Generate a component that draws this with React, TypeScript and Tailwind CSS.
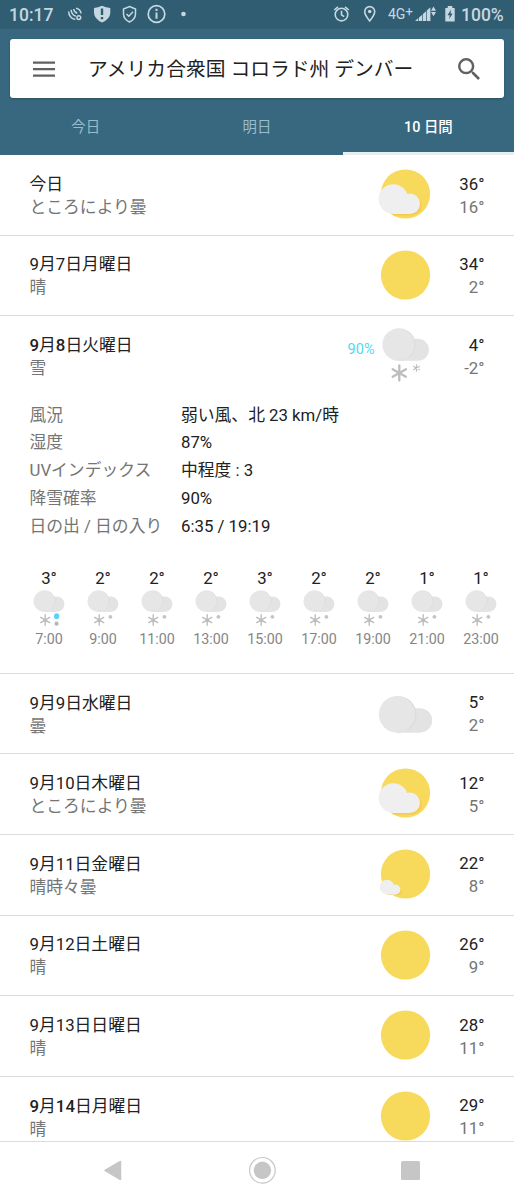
import type { ReactNode } from 'react'
import clsx from 'clsx'

type Condition = 'sunny' | 'mostlySunny' | 'partlyCloudy' | 'cloudy' | 'snow'

interface Day {
  date: string
  label: string
  condition: Condition
  high: string
  low: string
  bold?: boolean
}

const before: Day[] = [
  { date: '今日', label: 'ところにより曇', condition: 'partlyCloudy', high: '36°', low: '16°' },
  { date: '9月7日月曜日', label: '晴', condition: 'sunny', high: '34°', low: '2°' },
]

const selected: Day = { date: '9月8日火曜日', label: '雪', condition: 'snow', high: '4°', low: '-2°', bold: true }

const after: Day[] = [
  { date: '9月9日水曜日', label: '曇', condition: 'cloudy', high: '5°', low: '2°' },
  { date: '9月10日木曜日', label: 'ところにより曇', condition: 'partlyCloudy', high: '12°', low: '5°' },
  { date: '9月11日金曜日', label: '晴時々曇', condition: 'mostlySunny', high: '22°', low: '8°' },
  { date: '9月12日土曜日', label: '晴', condition: 'sunny', high: '26°', low: '9°' },
  { date: '9月13日日曜日', label: '晴', condition: 'sunny', high: '28°', low: '11°' },
  { date: '9月14日月曜日', label: '晴', condition: 'sunny', high: '29°', low: '11°', bold: true },
]

const details = [
  ['風況', '弱い風、北 23 km/時'],
  ['湿度', '87%'],
  ['UVインデックス', '中程度 : 3'],
  ['降雪確率', '90%'],
  ['日の出 / 日の入り', '6:35 / 19:19'],
]

const hours = [
  { time: '7:00', temp: '3°', sleet: true },
  { time: '9:00', temp: '2°' },
  { time: '11:00', temp: '2°' },
  { time: '13:00', temp: '2°' },
  { time: '15:00', temp: '3°' },
  { time: '17:00', temp: '2°' },
  { time: '19:00', temp: '2°' },
  { time: '21:00', temp: '1°' },
  { time: '23:00', temp: '1°' },
]

const tabs = ['今日', '明日', '10 日間']

/** Six-armed snowflake centred on x/y. */
function Flake({ x, y, r, width }: { x: number; y: number; r: number; width: number }) {
  const dx = r * 0.87
  const dy = r * 0.5
  return (
    <path
      d={`M${x} ${y - r}V${y + r}M${x - dx} ${y - dy}L${x + dx} ${y + dy}M${x - dx} ${y + dy}L${x + dx} ${y - dy}`}
      stroke="#bdbdbd"
      strokeWidth={width}
      strokeLinecap="round"
    />
  )
}

/** Large round cloud with a smaller one behind it, both resting on the same base line. */
function GrayCloud({ x, r, smallX, smallR, base }: { x: number; r: number; smallX: number; smallR: number; base: number }) {
  return (
    <>
      <path d={`M${x} ${base - smallR * 2}H${smallX}A${smallR} ${smallR} 0 0 1 ${smallX} ${base}H${x}Z`} fill="#e3e3e3" />
      <circle cx={x + r * 0.07} cy={base - r} r={r} fill="#dcdcdc" />
      <circle cx={x} cy={base - r} r={r} fill="#e6e6e6" />
      <path d={`M${x} ${base - 2.5}H${smallX}V${base}H${x}Z`} fill="#e4e4e4" />
    </>
  )
}

function WhiteCloud({ transform }: { transform?: string }) {
  return (
    <g transform={transform} fill="#efefef">
      <circle cx="18.3" cy="35" r="14.7" />
      <circle cx="34.8" cy="39.8" r="10.2" />
      <path d="M18 35H35V50H18Z" />
    </g>
  )
}

function WeatherIcon({ condition }: { condition: Condition }) {
  const hasSun = condition === 'sunny' || condition === 'mostlySunny' || condition === 'partlyCloudy'
  return (
    <svg viewBox="0 0 60 60" className="h-[60px] w-[60px] shrink-0" fill="none">
      {hasSun && <circle cx="30.5" cy="30" r="24.6" fill="#f7d95c" />}
      {condition === 'partlyCloudy' && (
        <>
          <path d="M36 30L42 33A10.5 10.5 0 0 1 44.5 48L38 51.5H18V49Z" fill="#f4cc4e" />
          <WhiteCloud />
        </>
      )}
      {condition === 'mostlySunny' && (
        <>
          <path d="M22 43.5L25 45L27 47.5Q27 50 23 51H12Z" fill="#f3cc50" />
          <WhiteCloud transform="translate(2.9 25.6) scale(0.5)" />
        </>
      )}
      {condition === 'cloudy' && <GrayCloud x={22} r={18.2} smallX={45} smallR={12.2} base={49.6} />}
      {condition === 'snow' && (
        <>
          <GrayCloud x={23.4} r={16} smallX={43} smallR={10.9} base={35.6} />
          <Flake x={24.3} y={48} r={7.6} width={2.3} />
          <Flake x={41.5} y={43} r={3.2} width={1.2} />
        </>
      )}
    </svg>
  )
}

function HourIcon({ sleet }: { sleet?: boolean }) {
  return (
    <svg viewBox="0 0 34 38" className="h-[38px] w-[34px]" fill="none">
      <GrayCloud x={12.1} r={10.6} smallX={24.8} smallR={7.7} base={21.8} />
      <Flake x={13.2} y={30} r={5.2} width={1.4} />
      {sleet ? (
        <>
          <ellipse cx="24.6" cy="26.3" rx="2.6" ry="3" fill="#5fd0f5" />
          <circle cx="24.6" cy="33.7" r="2.1" fill="#b5b5b5" />
        </>
      ) : (
        <circle cx="24.4" cy="26.8" r="1.9" fill="#c4c4c4" />
      )}
    </svg>
  )
}

function StatusBar() {
  return (
    <div className="flex h-[29px] items-center bg-[#305d71] text-[#c5d8e1]">
      <span className="w-[57px] pl-[9px] pt-px text-[17.5px] font-medium leading-[29px]">10:17</span>
      <svg viewBox="57 0 143 29" className="h-[29px] w-[143px]" fill="none" stroke="currentColor" strokeWidth="1.5">
        <path d="M68.7 11.5A8 8 0 0 0 75.3 19.6M71.2 9.8A7 7 0 0 0 75.8 16.3M73.7 9A5 5 0 0 0 77.3 13.2M76 8.2Q80.6 9 81 13.5" />
        <circle cx="78.8" cy="17.6" r="1.9" />
        <path d="M94 8Q98 7.5 102 5.8Q106 7.5 110.3 8V13Q110 19 102 22.5Q94.5 19 94 13Z" fill="currentColor" stroke="none" />
        <path d="M102 8.5V15M102 17V19.2" stroke="#305d71" strokeWidth="2.4" />
        <path d="M129.5 6.5L135.5 9V14Q135.3 19.5 129.5 22Q123.7 19.5 123.5 14V9Z" />
        <path d="M126.5 14L128.8 16.2L133 11.8" />
        <circle cx="156.5" cy="14" r="8.3" strokeWidth="1.7" />
        <path d="M156.5 12.5V18.8M156.5 8.8V11" strokeWidth="2" />
        <circle cx="183.5" cy="14" r="2.3" fill="currentColor" stroke="none" />
      </svg>
      <svg viewBox="330 0 54 29" className="ml-auto h-[29px] w-[54px]" fill="none" stroke="currentColor" strokeWidth="1.6">
        <circle cx="342.5" cy="14.6" r="6.3" />
        <path d="M342.5 10.8V14.8L345.2 16.6M335.2 10L339 6.9M349.8 10L346 6.9" />
        <path d="M370.7 21Q365.7 15 365.7 11.6A5 5 0 0 1 375.7 11.6Q375.7 15 370.7 21Z" />
        <circle cx="370.7" cy="11.5" r="1.8" fill="currentColor" stroke="none" />
      </svg>
      <span className="ml-[5px] w-[27px] whitespace-nowrap text-[14px] leading-[29px]">
        4G<span className="relative -top-[3px] text-[13px]">+</span>
      </span>
      <svg viewBox="416 0 46 29" className="h-[29px] w-[46px]" fill="currentColor">
        <path d="M416 21L419.3 18.1V21ZM420 17.5L423.2 14.7V21H420ZM423.9 14L427.1 11.2V21H423.9ZM427.8 10.6L431.4 7.3V21H427.8Z" />
        <path d="M434.5 6.5L437 10.8H432ZM434.5 16.2L437 12H432Z" />
        <path d="M446.3 8H448.7V6H453.3V8H455.7V21.5H446.3Z" />
        <path d="M452 9.5L448.5 15.2H450.7L450.2 19.3L453.6 13.5H451.5Z" fill="#305d71" />
      </svg>
      <span className="w-[53px] whitespace-nowrap pt-px text-[17.5px] font-medium leading-[29px]">100%</span>
    </div>
  )
}

function Header() {
  return (
    <header className="flex h-[155px] flex-col bg-[#37687f]">
      <StatusBar />
      <div className="mx-2.5 mt-2.5 flex h-[59px] shrink-0 items-center rounded-[3px] bg-white shadow-[0_1px_2px_rgba(0,0,0,0.25)]">
        <svg viewBox="0 0 22 16" className="ml-[23px] h-4 w-[22px]" fill="#616161">
          <path d="M0 0.5H22V2.8H0ZM0 7H22V9.3H0ZM0 13.5H22V15.8H0Z" />
        </svg>
        <h1 className="ml-[33px] flex-1 whitespace-nowrap pt-0.5 text-[19.8px] leading-[59px] text-[#212121]">
          アメリカ合衆国 コロラド州 デンバー
        </h1>
        <svg viewBox="3 3 17.5 17.5" className="mr-6 h-[22px] w-[22px]" fill="#616161">
          <path d="M15.5 14h-.79l-.28-.27A6.47 6.47 0 0 0 16 9.5 6.5 6.5 0 1 0 9.5 16c1.61 0 3.09-.59 4.23-1.57l.27.28v.79l5 4.99L20.49 19l-4.99-5zm-6 0C7.01 14 5 11.99 5 9.5S7.01 5 9.5 5 14 7.01 14 9.5 11.99 14 9.5 14z" />
        </svg>
      </div>
      <nav className="flex flex-1">
        {tabs.map((tab, i) => (
          <button
            key={tab}
            className={clsx(
              'flex-1 border-b-[3px] pt-[6px] text-[14.4px] leading-[48px]',
              i === 2 ? 'border-[#e8eef0] font-medium text-white' : 'border-transparent text-[#97bccb]',
            )}
          >
            {tab}
          </button>
        ))}
      </nav>
    </header>
  )
}

/** Splits the date so that only its digits take the medium weight. */
function DateText({ text, bold }: { text: string; bold?: boolean }) {
  if (!bold) return <>{text}</>
  return (
    <>
      {text.split(/(\d+)/).map((part, i) => (
        <span key={i} className={clsx(/\d/.test(part) && 'font-medium')}>
          {part}
        </span>
      ))}
    </>
  )
}

function DayRow({ day, chance }: { day: Day; chance?: string }) {
  return (
    <div className="flex h-[79.6px] pl-[29.5px] pr-[29.5px]">
      <div className="flex-1 pt-[17.8px] leading-[23px]">
        <p className="text-[#212121]">
          <DateText text={day.date} bold={day.bold} />
        </p>
        <p className="text-[#757575]">{day.label}</p>
      </div>
      {chance && <span className="pt-[22px] text-[14.5px] leading-[23px] text-[#4fdcee]">{chance}</span>}
      <div className="pt-[9px]">
        <WeatherIcon condition={day.condition} />
      </div>
      <div className="w-[50px] pt-[17.5px] text-right leading-[23px]">
        <p className="text-[#212121]">{day.high}</p>
        <p className="text-[#757575]">{day.low}</p>
      </div>
    </div>
  )
}

function Section({ children }: { children: ReactNode }) {
  return <section className="border-b border-[#dcdcdc]">{children}</section>
}

function SelectedDay() {
  return (
    <div className="h-[356.6px]">
      <DayRow day={selected} chance="90%" />
      <dl className="flex flex-col pl-[29.5px] pt-[6px]">
        {details.map(([name, value]) => (
          <div key={name} className="flex h-[27.7px] leading-[27.7px]">
            <dt className="w-[151.5px] text-[#757575]">{name}</dt>
            <dd className="text-[#212121]">{value}</dd>
          </div>
        ))}
      </dl>
      <div className="flex pl-[22px] pt-[26px]">
        {hours.map((hour) => (
          <div key={hour.time} className="flex w-[54px] flex-col items-center">
            <span className="leading-6 text-[#212121]">{hour.temp}</span>
            <HourIcon sleet={hour.sleet} />
            <span className="text-[14.3px] leading-[22px] text-[#858585]">{hour.time}</span>
          </div>
        ))}
      </div>
    </div>
  )
}

function NavigationBar() {
  return (
    <footer className="h-[59px] shrink-0 border-t border-[#dcdcdc] bg-white">
      <svg viewBox="0 1142 514 58" className="h-[58px] w-full" fill="#c6c6c6">
        <path d="M105 1170.3L120.5 1161.5V1179.5Z" stroke="#c6c6c6" strokeWidth="1.5" strokeLinejoin="round" />
        <circle cx="262.4" cy="1170.3" r="8.7" />
        <circle cx="262.4" cy="1170.3" r="12.8" fill="none" stroke="#c6c6c6" strokeWidth="1.2" />
        <rect x="401" y="1161" width="19" height="19" rx="1.5" />
      </svg>
    </footer>
  )
}

export default function App() {
  return (
    <div className="flex h-[1200px] w-[514px] flex-col overflow-hidden bg-white font-[Roboto,'Noto_Sans_CJK_JP',sans-serif] text-[16.8px]">
      <Header />
      <main className="min-h-0 flex-1 overflow-hidden">
        {before.map((day) => (
          <Section key={day.date}>
            <DayRow day={day} />
          </Section>
        ))}
        <Section>
          <SelectedDay />
        </Section>
        {after.map((day) => (
          <Section key={day.date}>
            <DayRow day={day} />
          </Section>
        ))}
      </main>
      <NavigationBar />
    </div>
  )
}
